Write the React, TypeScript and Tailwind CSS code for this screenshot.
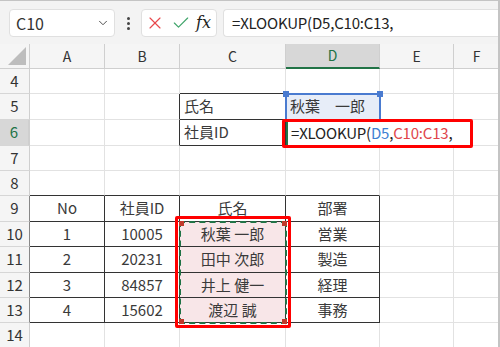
import { ChevronDown, Check, X } from "lucide-react";

const cols = ["", "A", "B", "C", "D", "E", "F"];
const rows = [4, 5, 6, 7, 8, 9, 10, 11, 12, 13, 14];

// cell text by "col+row"
const cells: Record<string, string> = {
  C5: "氏名",
  C6: "社員ID",
  D5: "秋葉　一郎",
  A9: "No",
  B9: "社員ID",
  C9: "氏名",
  D9: "部署",
  A10: "1",
  B10: "10005",
  C10: "秋葉 一郎",
  D10: "営業",
  A11: "2",
  B11: "20231",
  C11: "田中 次郎",
  D11: "製造",
  A12: "3",
  B12: "84857",
  C12: "井上 健一",
  D12: "経理",
  A13: "4",
  B13: "15602",
  C13: "渡辺 誠",
  D13: "事務",
};

const inTable = (c: string, r: number) =>
  (["A", "B", "C", "D"].includes(c) && r >= 9 && r <= 13) ||
  (["C", "D"].includes(c) && (r === 5 || r === 6));

function rightBlack(c: string, r: number) {
  const i = cols.indexOf(c);
  return inTable(c, r) || inTable(cols[i + 1] ?? "", r);
}

function bottomBlack(c: string, r: number) {
  return inTable(c, r) || inTable(c, r + 1);
}

function Cell({ c, r }: { c: string; r: number }) {
  const key = c + r;
  const text = cells[key];
  const center = r >= 9;
  const pink = c === "C" && r >= 10 && r <= 13;
  const hideRight = (c === "D" || c === "E") && r === 6;

  return (
    <div
      className={[
        "flex items-center border-b overflow-visible whitespace-nowrap text-[15px] text-[#3a3a3a]",
        hideRight ? "" : "border-r",
        rightBlack(c, r) ? "border-r-[#333]" : "border-r-[#e2e2e2]",
        bottomBlack(c, r) ? "border-b-[#333]" : "border-b-[#e2e2e2]",
        center ? "justify-center" : "pl-[4px]",
        pink ? "bg-[#f8e6e8]" : "",
        key === "D5" ? "bg-[#e7edf8]" : "",
      ].join(" ")}
    >
      {text}
    </div>
  );
}

export default function App() {
  return (
    <div className="w-[500px] h-[347px] overflow-hidden bg-white border-t border-r-2 border-[#c4c4c4] font-['Noto_Sans_CJK_JP','Noto_Sans',sans-serif]">
      {/* formula bar */}
      <div className="h-[43px] bg-[#f3f3f3] flex items-center pt-[1px] pl-[9px] gap-[6px]">
        <div className="w-[106px] h-[28px] bg-white rounded-[4px] border border-[#e0e0e0] flex items-center justify-between pl-[6px] pr-[4px] text-[16px] text-[#333]">
          C10
          <ChevronDown className="w-[14px] h-[14px] text-[#444]" strokeWidth={1.6} />
        </div>
        <div className="w-[14px] flex flex-col items-center gap-[2px]">
          <span className="w-[3px] h-[3px] bg-[#444] rounded-full" />
          <span className="w-[3px] h-[3px] bg-[#444] rounded-full" />
          <span className="w-[3px] h-[3px] bg-[#444] rounded-full" />
        </div>
        <div className="w-[76px] h-[28px] bg-white rounded-[4px] border border-[#e0e0e0] flex items-center justify-between pl-[3px] pr-[5px]">
          <X className="w-[20px] h-[20px] text-[#e8484c]" strokeWidth={1.4} />
          <Check className="w-[20px] h-[20px] text-[#3fa46a]" strokeWidth={1.4} />
          <span className="font-['DejaVu_Serif',serif] italic text-[16px] text-[#222]">fx</span>
        </div>
        <div className="flex-1 h-[28px] bg-white rounded-l-[4px] border border-r-0 border-[#e0e0e0] flex items-center pl-[8px] text-[15px] tracking-[-0.2px] text-[#222]">
          =XLOOKUP(D5,C10:C13,
        </div>
      </div>

      {/* sheet */}
      <div className="relative">
        <div className="grid grid-cols-[30px_75px_75px_106px_94px_74px_46px] grid-rows-[25px_25px_26px_26px_25px_25px_26px_25px_26px_25px_25px_25px]">
          {cols.map((c) => (
            <div
              key={"h" + c}
              className={[
                "flex items-center justify-center text-[14px] text-[#333] border-b border-r border-[#cfcfcf]",
                c === "D" ? "bg-[#d7d7d7] border-b-2 border-b-[#217346] text-[#217346]" : "bg-[#f5f5f5]",
                c === "" ? "relative" : "",
              ].join(" ")}
            >
              {c === "" ? (
                <svg className="absolute right-[3px] bottom-[3px]" width="18" height="18" viewBox="0 0 18 18">
                  <polygon points="18,0 18,18 0,18" fill="#bdbdbd" />
                </svg>
              ) : (
                c
              )}
            </div>
          ))}
          {rows.map((r) => (
            <div key={"r" + r} className="contents">
              <div
                className={[
                  "flex items-center justify-center text-[15px] border-b border-[#d6d6d6]",
                  r === 6
                    ? "bg-[#d7d7d7] border-r-2 border-r-[#217346] text-[#217346]"
                    : "bg-[#f5f5f5] border-r text-[#333]",
                  r >= 9 && r <= 13 ? "border-r-[#888]" : "border-r-[#cfcfcf]",
                ].join(" ")}
              >
                {r}
              </div>
              {cols.slice(1).map((c) => (
                <Cell key={c + r} c={c} r={r} />
              ))}
            </div>
          ))}
        </div>

        {/* D5 selection (blue) */}
        <div className="absolute left-[285px] top-[49px] w-[96px] h-[28px] border-2 border-[#4a7bd0]">
          <span className="absolute -left-[4px] -top-[4px] w-[6px] h-[6px] bg-[#4a7bd0]" />
          <span className="absolute -right-[4px] -top-[4px] w-[6px] h-[6px] bg-[#4a7bd0]" />
        </div>

        {/* in-cell editor D6 */}
        <div className="absolute left-[286px] top-[77px] w-[180px] h-[25px] bg-white flex items-center pl-[3px] text-[15px] tracking-[-0.2px] text-[#222] whitespace-nowrap border-l-2 border-[#217346]">
          =XLOOKUP(<span className="text-[#3f7fd3]">D5</span>,<span className="text-[#e0464b]">C10:C13</span>,
        </div>

        {/* red highlight around formula */}
        <div className="absolute left-[282px] top-[75px] w-[191px] h-[29px] border-[3px] border-[#ff0000] rounded-[2px]" />

        {/* range C10:C13 marching ants */}
        <div className="absolute left-[179px] top-[177px] w-[108px] h-[103px] border-2 border-dashed border-[#217346]">
          <span className="absolute -left-[2px] -top-[2px] w-[5px] h-[5px] bg-[#c0392b]" />
          <span className="absolute -right-[2px] -top-[2px] w-[5px] h-[5px] bg-[#c0392b]" />
          <span className="absolute -left-[2px] -bottom-[2px] w-[5px] h-[5px] bg-[#c0392b]" />
          <span className="absolute -right-[2px] -bottom-[2px] w-[5px] h-[5px] bg-[#c0392b]" />
        </div>

        {/* red highlight around range */}
        <div className="absolute left-[175px] top-[172px] w-[116px] h-[112px] border-[3px] border-[#ff0000] rounded-[2px]" />
      </div>
    </div>
  );
}
